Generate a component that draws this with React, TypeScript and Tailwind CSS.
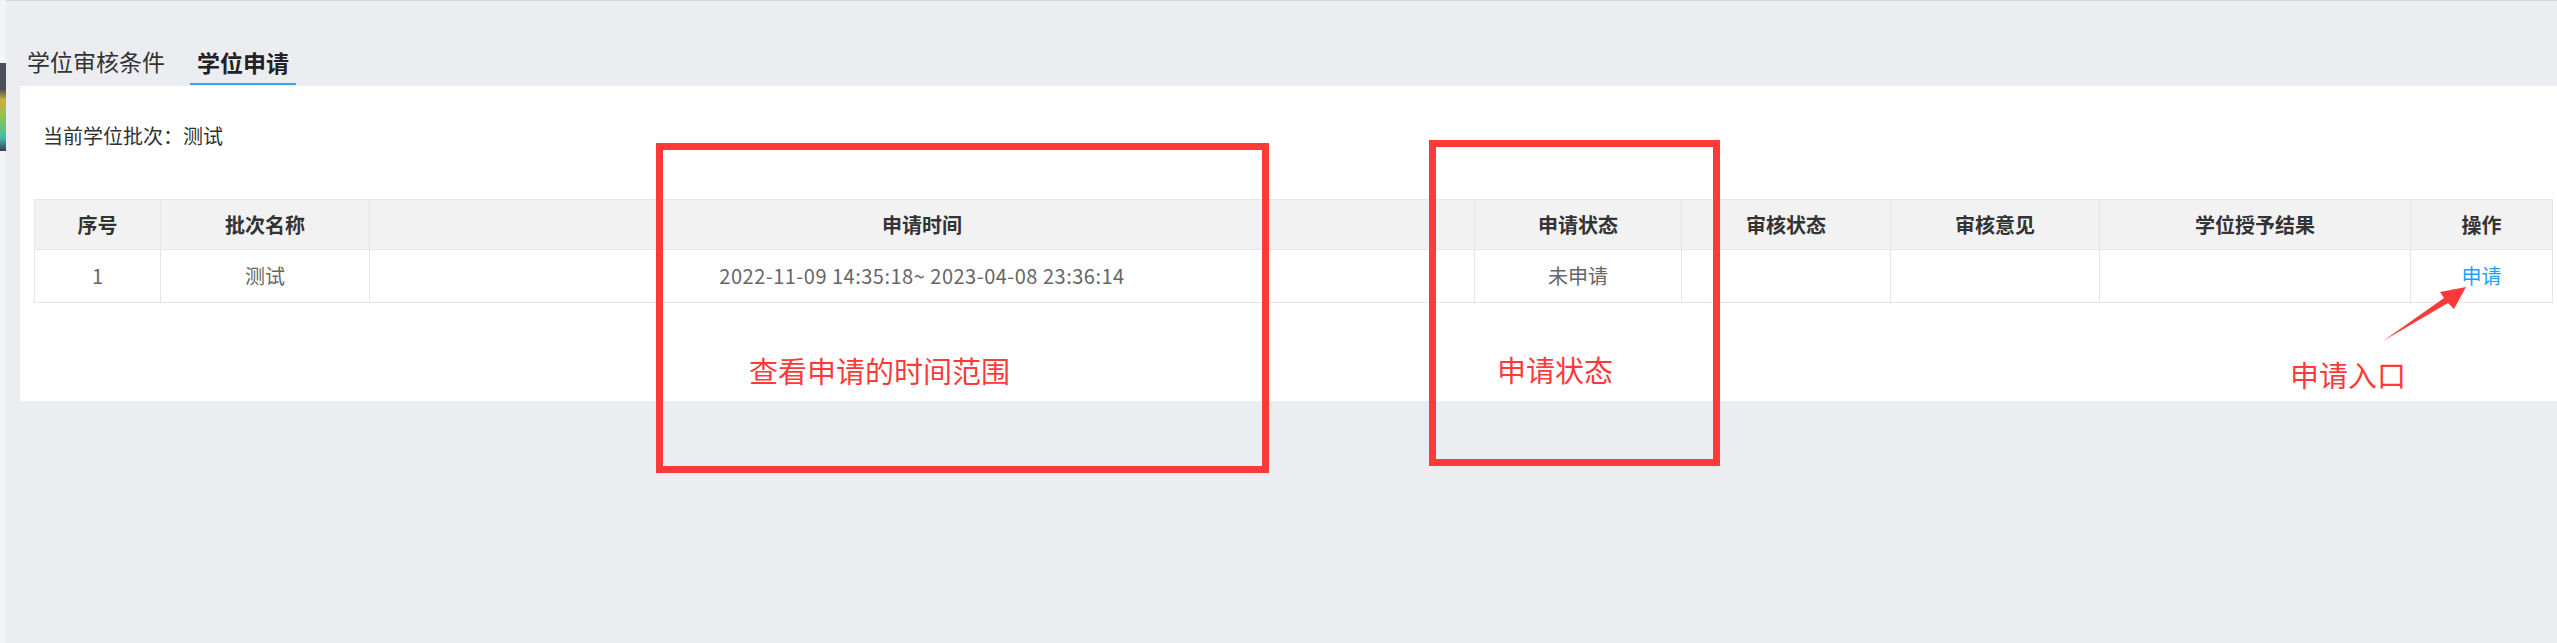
const cols = [
  { name: "序号", w: 126 },
  { name: "批次名称", w: 209 },
  { name: "申请时间", w: 1105 },
  { name: "申请状态", w: 207 },
  { name: "审核状态", w: 209 },
  { name: "审核意见", w: 209 },
  { name: "学位授予结果", w: 311 },
  { name: "操作", w: 142 },
];

const rows = [
  {
    no: "1",
    batch: "测试",
    time: "2022-11-09 14:35:18~ 2023-04-08 23:36:14",
    status: "未申请",
    review: "",
    opinion: "",
    result: "",
  },
];

const DegreeApply = () => {
  return (
    <div className="relative flex w-full h-[643px] bg-[#ecedf1] font-['Microsoft_YaHei','Noto_Sans_CJK_SC',sans-serif] overflow-hidden">
      {/* left edge of the outer frame */}
      <div className="w-[6px] shrink-0 bg-[#f3f4f7] pt-[63px]">
        <div className="h-[88px] w-[6px] bg-[linear-gradient(to_bottom,#4b4f59_0%,#4b4f59_30%,#cdb13a_42%,#8cc24f_62%,#3fbfae_85%,#3b3f48_100%)]" />
      </div>

      <div className="flex-1 flex flex-col border-t border-[#d6d7db]">
        {/* tabs */}
        <div className="flex items-end h-[84px] pl-[21px] text-[23px] text-[#333]">
          <div className="h-[44px] flex items-center pb-[3px]">学位审核条件</div>
          <div className="h-[44px] flex items-center ml-[25px] px-[7px] font-bold text-[#222] border-b-2 border-[#41a0e8]">
            学位申请
          </div>
        </div>

        {/* panel */}
        <div className="mt-[1px] ml-[14px] bg-white pt-[40px] pb-[98px] pl-[14px] pr-[5px]">
          <div className="pl-[9px] text-[20px] leading-[20px] text-[#333]">当前学位批次：测试</div>

          <table className="mt-[53px] table-fixed border-collapse w-[2518px] text-[20px]">
            <colgroup>
              {cols.map((c) => (
                <col key={c.name} style={{ width: c.w }} />
              ))}
            </colgroup>
            <thead>
              <tr className="h-[50px] bg-[#f2f2f2]">
                {cols.map((c) => (
                  <th key={c.name} className="border border-[#e6e6e6] font-bold text-[#333] text-center">
                    {c.name}
                  </th>
                ))}
              </tr>
            </thead>
            <tbody>
              {rows.map((r) => (
                <tr key={r.no} className="h-[53px] text-[#666] text-center">
                  <td className="border border-[#e6e6e6]">{r.no}</td>
                  <td className="border border-[#e6e6e6]">{r.batch}</td>
                  <td className="border border-[#e6e6e6] tracking-[0.5px]">{r.time}</td>
                  <td className="border border-[#e6e6e6]">{r.status}</td>
                  <td className="border border-[#e6e6e6]">{r.review}</td>
                  <td className="border border-[#e6e6e6]">{r.opinion}</td>
                  <td className="border border-[#e6e6e6]">{r.result}</td>
                  <td className="border border-[#e6e6e6]">
                    <span className="text-[#1e9fff] cursor-pointer">申请</span>
                  </td>
                </tr>
              ))}
            </tbody>
          </table>
        </div>
      </div>

      {/* annotations drawn over the screenshot */}
      <div className="absolute left-[656px] top-[143px] w-[613px] h-[330px] border-[7px] border-[#fc3a3a]" />
      <div className="absolute left-[749px] top-[352px] text-[29px] leading-[36px] text-[#fc3a3a]">查看申请的时间范围</div>

      <div className="absolute left-[1429px] top-[140px] w-[291px] h-[326px] border-[7px] border-[#fc3a3a]" />
      <div className="absolute left-[1497px] top-[351px] text-[29px] leading-[36px] text-[#fc3a3a]">申请状态</div>

      <svg className="absolute left-[2370px] top-[280px]" width="110" height="70" viewBox="2370 280 110 70">
        <polygon points="2383,341 2444,298 2440,292 2466,287 2454,309 2448,303" fill="#fc3a3a" />
      </svg>
      <div className="absolute left-[2290px] top-[356px] text-[29px] leading-[36px] text-[#fc3a3a]">申请入口</div>
    </div>
  );
};

export default function App() {
  return <DegreeApply />;
}
